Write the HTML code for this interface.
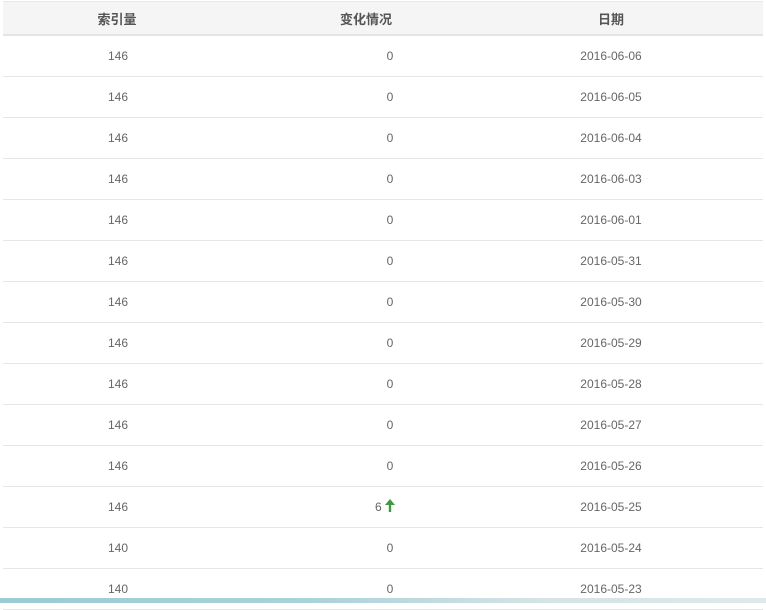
<!DOCTYPE html>
<html><head><meta charset="utf-8"><style>
*{margin:0;padding:0;box-sizing:border-box}
body{width:766px;height:603px;overflow:hidden;background:#fff;position:relative;font-family:"Liberation Sans","Noto Sans CJK SC",sans-serif}
.hdr{position:absolute;left:3px;top:1px;width:760px;height:35px;background:#f5f5f5;border-top:1px solid #e8e8e8;border-bottom:2px solid #e4e4e4}
.row{position:absolute;left:3px;width:760px;height:41px;border-bottom:1px solid #e6e6e6}
.c{position:absolute;top:0;height:100%;display:flex;align-items:center;justify-content:center;transform:translateX(-50%);white-space:nowrap}
.hdr .c{font-size:13px;font-weight:bold;color:#555}
.row .c{font-size:12px;color:#666}
.stripe{position:absolute;left:0;top:598px;width:766px;height:5px;background:linear-gradient(90deg,#9ccbd4,#a9d2d9 40%,#d4e3e6 70%,#dfe9eb)}
</style></head><body>
<div class="hdr"><div class="c" style="left:114px">索引量</div><div class="c" style="left:363px">变化情况</div><div class="c" style="left:608px">日期</div></div>
<div class="row" style="top:36px"><div class="c" style="left:115px">146</div><div class="c" style="left:387px">0</div><div class="c" style="left:608px">2016-06-06</div></div>
<div class="row" style="top:77px"><div class="c" style="left:115px">146</div><div class="c" style="left:387px">0</div><div class="c" style="left:608px">2016-06-05</div></div>
<div class="row" style="top:118px"><div class="c" style="left:115px">146</div><div class="c" style="left:387px">0</div><div class="c" style="left:608px">2016-06-04</div></div>
<div class="row" style="top:159px"><div class="c" style="left:115px">146</div><div class="c" style="left:387px">0</div><div class="c" style="left:608px">2016-06-03</div></div>
<div class="row" style="top:200px"><div class="c" style="left:115px">146</div><div class="c" style="left:387px">0</div><div class="c" style="left:608px">2016-06-01</div></div>
<div class="row" style="top:241px"><div class="c" style="left:115px">146</div><div class="c" style="left:387px">0</div><div class="c" style="left:608px">2016-05-31</div></div>
<div class="row" style="top:282px"><div class="c" style="left:115px">146</div><div class="c" style="left:387px">0</div><div class="c" style="left:608px">2016-05-30</div></div>
<div class="row" style="top:323px"><div class="c" style="left:115px">146</div><div class="c" style="left:387px">0</div><div class="c" style="left:608px">2016-05-29</div></div>
<div class="row" style="top:364px"><div class="c" style="left:115px">146</div><div class="c" style="left:387px">0</div><div class="c" style="left:608px">2016-05-28</div></div>
<div class="row" style="top:405px"><div class="c" style="left:115px">146</div><div class="c" style="left:387px">0</div><div class="c" style="left:608px">2016-05-27</div></div>
<div class="row" style="top:446px"><div class="c" style="left:115px">146</div><div class="c" style="left:387px">0</div><div class="c" style="left:608px">2016-05-26</div></div>
<div class="row" style="top:487px"><div class="c" style="left:382px">6&nbsp;<svg width="10" height="13" viewBox="0 0 10 13" style="margin-top:-4px"><path d="M5 0 L10 6 H6.2 V13 H3.8 V6 H0 Z" fill="#3f9a3f"/></svg></div><div class="c" style="left:115px">146</div><div class="c" style="left:608px">2016-05-25</div></div>
<div class="row" style="top:528px"><div class="c" style="left:115px">140</div><div class="c" style="left:387px">0</div><div class="c" style="left:608px">2016-05-24</div></div>
<div class="row" style="top:569px"><div class="c" style="left:115px">140</div><div class="c" style="left:387px">0</div><div class="c" style="left:608px">2016-05-23</div></div>
<div class="stripe"></div>
</body></html>
